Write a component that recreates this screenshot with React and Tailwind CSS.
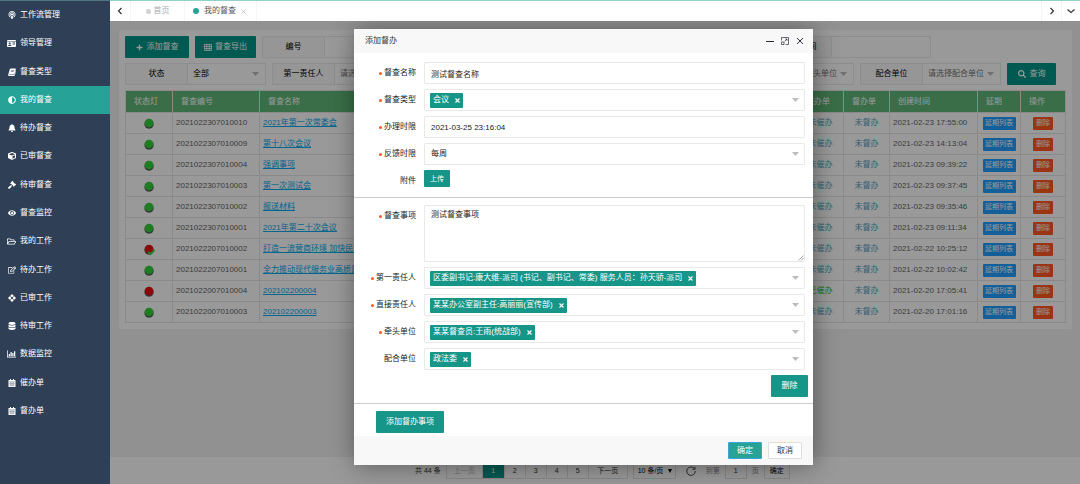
import clsx from 'clsx'
import {
  FaAdjust,
  FaBell,
  FaCube,
  FaDatabase,
  FaEye,
  FaGavel,
  FaIdCard,
  FaPlus,
  FaPodcast,
  FaRegEdit,
  FaRegFolderOpen,
  FaSearch,
} from 'react-icons/fa'

function BookIcon() {
  return (
    <svg viewBox="0 0 16 16" width="1em" height="1em" fill="currentColor">
      <path d="M5.500 1h8.800c1 0 1.600.8 1.300 1.800l-2.600 9c-.2.7-.8 1.200-1.600 1.200H3c-.7 0-.9.9-.1 1h9.300c.5 0 .9-.3 1.100-.8l2.500-8c.6.5.3 1.300.2 1.600l-2.300 7.500c-.3 1-1.100 1.700-2 1.700H2.500C.8 16 0 14.300.5 12.900L3.600 2.500C3.900 1.600 4.600 1 5.500 1zm.9 3-.3 1h6l.3-1zm-.8 2.600-.3 1h6l.3-1z" />
    </svg>
  )
}

function DiamondIcon() {
  return (
    <svg viewBox="0 0 16 16" width="1em" height="1em" fill="currentColor">
      <path
        fillRule="evenodd"
        d="M8 0l3.500 3.500-1 1.300 1 1 1.200-1.200L16 8l-3.300 3.400-1.200-1.200-1 1 1 1.300L8 16l-3.500-3.500 1-1.300-1-1-1.200 1.200L0 8l3.300-3.400 1.200 1.200 1-1-1-1.300zM8 5L5 8l3 3 3-3z"
      />
    </svg>
  )
}

function ChartIcon() {
  return (
    <svg viewBox="0 0 18 16" width="9" height="8" fill="currentColor">
      <path d="M0 1h1.500v12.500H18V15H0zM3.500 8H6v4.500H3.500zM7 4h2.500v8.500H7zM10.500 6H13v6.500h-2.500zM14 2.500h2.500v10H14z" />
    </svg>
  )
}

function CalendarIcon() {
  return (
    <svg viewBox="0 0 16 16" width="1em" height="1em" fill="currentColor">
      <path
        fillRule="evenodd"
        d="M4 0h2v2h4V0h2v2h2.500c.3 0 .5.2.5.5v13c0 .3-.2.500-.5.500h-13a.5.5 0 0 1-.5-.5v-13c0-.3.2-.5.5-.5H4z"
      />
      <path
        d="M2 5.500h12M2 8.800h12M2 12h12M5.300 5.500V15M8 5.500V15M10.700 5.500V15"
        fill="none"
        stroke="#2f4056"
        strokeWidth=".6"
      />
    </svg>
  )
}

function TableIcon() {
  return (
    <svg viewBox="0 0 16 14" width="8" height="7" fill="none" stroke="currentColor" strokeWidth="1.6">
      <path d="M1 1h14v12H1zM1 5h14M1 9h14M5.500 1v12M10.500 1v12" />
    </svg>
  )
}

function Caret() {
  return (
    <svg viewBox="0 0 7 4" width="7" height="4" className="shrink-0" fill="#bbb">
      <path d="M0 0h7L3.500 4z" />
    </svg>
  )
}

function Chevron({ d }) {
  return (
    <svg viewBox="0 0 8 8" width="8" height="8" fill="none" stroke="#333" strokeWidth="1.2">
      <path d={d} />
    </svg>
  )
}

const menus = [
  { name: '工作流管理', icon: <FaPodcast /> },
  { name: '领导管理', icon: <FaIdCard className="text-[9px]" /> },
  { name: '督查类型', icon: <BookIcon /> },
  { name: '我的督查', icon: <FaAdjust />, active: true },
  { name: '待办督查', icon: <FaBell /> },
  { name: '已审督查', icon: <FaCube /> },
  { name: '待审督查', icon: <FaGavel /> },
  { name: '督查监控', icon: <FaEye /> },
  { name: '我的工作', icon: <FaRegFolderOpen className="text-[9px]" /> },
  { name: '待办工作', icon: <FaRegEdit /> },
  { name: '已审工作', icon: <DiamondIcon /> },
  { name: '待审工作', icon: <FaDatabase /> },
  { name: '数据监控', icon: <ChartIcon /> },
  { name: '催办单', icon: <CalendarIcon /> },
  { name: '督办单', icon: <CalendarIcon /> },
]

const rows = [
  { id: '2021022307010010', name: '2021年第一次常委会', time: '2021-02-23 17:55:00' },
  { id: '2021022307010009', name: '第十八次会议', time: '2021-02-23 14:13:04' },
  { id: '2021022307010004', name: '强调事项', time: '2021-02-23 09:39:22' },
  { id: '2021022307010003', name: '第一次测试会', time: '2021-02-23 09:37:45' },
  { id: '2021022307010002', name: '报送材料', time: '2021-02-23 09:35:46' },
  { id: '2021022307010001', name: '2021年第二十次会议', time: '2021-02-23 09:11:34' },
  {
    id: '2021022207010002',
    name: '打造一流营商环境 加快民营经济发展',
    time: '2021-02-22 10:25:12',
    light: 'done',
  },
  { id: '2021022207010001', name: '全力推动现代服务业高质量发展', time: '2021-02-22 10:02:42' },
  { id: '2021022007010004', name: '202102200004', time: '2021-02-20 17:05:41', light: 'red', urged: true },
  { id: '2021022007010003', name: '202102200003', time: '2021-02-20 17:01:16' },
]

const inputFilters = ['编号', '名称', '类型', '创建时间']

const selectFilters = [
  { label: '状态', value: '全部' },
  { label: '第一责任人', value: '请选择第一责任人', empty: true },
  { label: '直接责任人', value: '请选择直接责任人', empty: true },
  { label: '督查类型', value: '请选择督查类型', empty: true },
  { label: '牵头单位', value: '请选择牵头单位', empty: true },
  { label: '配合单位', value: '请选择配合单位', empty: true },
]

function Sidebar() {
  return (
    <nav className="w-[110px] shrink-0 border-t border-[#4f7580] bg-[#2f4056] text-white">
      <ul className="flex min-h-[424px] flex-col">
        {menus.map(({ name, icon, active }) => (
          <li key={name} className="flex flex-1">
            <a
              href="#"
              className={clsx('flex flex-1 items-center gap-1 pl-[7px]', active && 'bg-[#26a296]')}
            >
              <span className="flex w-[9px] justify-center text-[8px]">{icon}</span>
              {name}
            </a>
          </li>
        ))}
      </ul>
    </nav>
  )
}

function TabBar() {
  return (
    <header className="flex h-[21px] shrink-0 border-t border-[#93d0ca] bg-white">
      <button aria-label="向左" className="flex w-[21px] items-center justify-center border-r border-[#f6f6f6]">
        <Chevron d="M5.500 1L2.500 4l3 3" />
      </button>
      <a href="#" className="flex w-[54px] items-center justify-center gap-[3px] border-r border-[#f6f6f6] text-[#aaa]">
        <i className="size-[5px] rounded-full bg-[#d2d2d2]" />
        首页
      </a>
      <a href="#" className="flex w-[72px] items-center gap-[5px] border-r border-[#f6f6f6] pl-2 text-[#555]">
        <i className="size-[6px] rounded-full bg-[#26a296]" />
        我的督查
        <svg viewBox="0 0 5 5" width="5" height="5" stroke="#bbb" strokeWidth=".8">
          <path d="M.5.5l4 4M4.500.5l-4 4" />
        </svg>
      </a>
      <button
        aria-label="向右"
        className="ml-auto flex w-5 items-center justify-center border-l border-[#f6f6f6]"
      >
        <Chevron d="M2.500 1l3 3-3 3" />
      </button>
      <button aria-label="更多" className="flex w-[19px] items-center justify-center border-l border-[#f6f6f6]">
        <Chevron d="M.5 2.500L4 5.500l3.500-3" />
      </button>
    </header>
  )
}

function Filters() {
  return (
    <>
      <div className="flex gap-[6px]">
        <button className="flex h-[22px] w-16 items-center justify-center gap-1 rounded-[1px] bg-[#009688] text-white">
          <FaPlus className="text-[7px]" />
          添加督查
        </button>
        <button className="flex h-[22px] w-[61px] items-center justify-center gap-[3px] rounded-[1px] bg-[#009688] text-white">
          <TableIcon />
          督查导出
        </button>
        <div className="flex gap-[7px]">
          {inputFilters.map(label => (
            <div key={label} className="flex h-[22px] w-[162px] border border-[#ececec]">
              <label
                htmlFor={`filter-${label}`}
                className="flex w-[62px] items-center justify-center border-r border-[#ececec] bg-[#fbfbfb] text-black"
              >
                {label}
              </label>
              <input id={`filter-${label}`} className="min-w-0 flex-1 bg-white px-[6px]" />
            </div>
          ))}
        </div>
      </div>
      <div className="mt-[5px] flex gap-[6px]">
        {selectFilters.map(({ label, value, empty }) => (
          <div key={label} className="flex h-[22px] w-[141px] border border-[#ececec]">
            <label
              htmlFor={`filter-${label}`}
              className="flex w-[62px] items-center justify-center border-r border-[#ececec] bg-[#fbfbfb] text-black"
            >
              {label}
            </label>
            <div className="flex min-w-0 flex-1 items-center pr-[6px]">
              <select
                id={`filter-${label}`}
                className={clsx(
                  'h-full min-w-0 flex-1 appearance-none pl-[5px]',
                  empty ? 'text-[#757575]' : 'text-black',
                )}
              >
                <option>{value}</option>
              </select>
              <Caret />
            </div>
          </div>
        ))}
        <button className="flex h-[22px] w-[49px] items-center justify-center gap-1 rounded-[1px] bg-[#009688] text-white">
          <FaSearch />
          查询
        </button>
      </div>
    </>
  )
}

function Light({ type }) {
  return (
    <svg viewBox="0 0 24 24" width="11" height="11" overflow="visible" className="mx-auto">
      <circle cx="11" cy="13" r="11" fill="#c4c4c4" />
      <circle cx="11" cy="13.500" r="9.500" fill="#555" />
      <circle cx="11" cy="11" r="9.500" fill={type ? '#e81010' : '#2fd038'} />
      {type === 'done' && <path d="M9 17l5 5 9-9" fill="none" stroke="#3bdc3b" strokeWidth="4" />}
    </svg>
  )
}

function SuperviseTable() {
  return (
    <table className="mt-[5px] w-full table-fixed border-collapse text-left text-[#666] [&_td]:border [&_td]:border-[#e6e6e6] [&_td]:px-[3px] [&_th]:border [&_th]:border-[#e6e6e6] [&_th]:pl-2 [&_th]:font-normal">
      <thead>
        <tr className="h-[22px] bg-[#5fb878] text-white">
          <th className="w-[47px]">状态灯</th>
          <th className="w-[87px]">督查编号</th>
          <th>督查名称</th>
          <th className="w-[46px]">催办单</th>
          <th className="w-[46px]">督办单</th>
          <th className="w-[88px]">创建时间</th>
          <th className="w-[43px]">延期</th>
          <th className="w-[45px]">操作</th>
        </tr>
      </thead>
      <tbody>
        {rows.map(({ id, name, time, light, urged }) => (
          <tr key={id} className="h-[21px]">
            <td>
              <Light type={light} />
            </td>
            <td>{id}</td>
            <td>
              <a href="#" className="text-[#01aaed] underline">
                {name}
              </a>
            </td>
            <td className="text-center">
              <a href="#" className={urged ? 'text-[#2bc012]' : 'text-[#5b9dbd]'}>
                {urged ? '已催办' : '未催办'}
              </a>
            </td>
            <td className="text-center">
              <a href="#" className="text-[#5b9dbd]">
                未督办
              </a>
            </td>
            <td>{time}</td>
            <td className="text-center">
              <button className="h-[13px] w-[33px] rounded-[1px] bg-[#1e9fff] text-[7px] text-white">延期列表</button>
            </td>
            <td className="text-center">
              <button className="h-[13px] w-5 rounded-[1px] bg-[#ff5722] text-[7px] text-white">删除</button>
            </td>
          </tr>
        ))}
      </tbody>
    </table>
  )
}

function Pagination() {
  return (
    <footer className="mt-auto flex h-[27px] items-center gap-[5px] bg-white pl-[305px] text-[7px] text-[#333]">
      <span>共 44 条</span>
      <div className="flex h-4 border border-[#e2e2e2] [&>button]:border-r [&>button]:border-[#e2e2e2] [&>button:last-child]:border-r-0">
        <button disabled className="w-[36px] text-[#bbb]">
          上一页
        </button>
        <button className="w-[22px] bg-[#009688] text-white">1</button>
        {[2, 3, 4, 5].map(page => (
          <button key={page} className="w-[21px]">
            {page}
          </button>
        ))}
        <button className="w-[38px]">下一页</button>
      </div>
      <div className="flex h-4 w-[43px] items-center border border-[#e2e2e2] pr-[3px]">
        <select aria-label="每页条数" className="h-full min-w-0 flex-1 appearance-none pl-1 text-black">
          <option>10 条/页</option>
        </select>
        <svg viewBox="0 0 4 4" width="4" height="4" fill="#000">
          <path d="M0 0h4L2 4z" />
        </svg>
      </div>
      <button aria-label="刷新" className="mx-[5px]">
        <svg viewBox="0 0 20 20" width="10" height="10" fill="none" stroke="#333" strokeWidth="1.8">
          <path d="M17 5.500A8.500 8.500 0 1 0 18.500 10M18 1.500v5h-5" />
        </svg>
      </button>
      <label htmlFor="page" className="text-[#888]">
        到第
      </label>
      <input id="page" defaultValue="1" className="h-4 w-[22px] border border-[#e2e2e2] text-center" />
      <span className="text-[#888]">页</span>
      <button className="h-4 w-[26px] border border-[#e2e2e2] text-black">确定</button>
    </footer>
  )
}

function FormRow({ label, id, required, children }) {
  return (
    <div className="flex gap-2 pr-2">
      <label
        htmlFor={id}
        className="flex h-[22px] w-[62px] shrink-0 items-center justify-end gap-[2px] text-[#222]"
      >
        {required && <i className="size-[3px] rounded-full bg-[#ff5722]" />}
        {label}
      </label>
      {children}
    </div>
  )
}

function TagSelect({ id, tag }) {
  return (
    <div className="flex h-[22px] flex-1 items-center justify-between rounded-[1px] border border-[#e9e9e9] px-[5px]">
      <span className="flex h-[15px] items-center gap-[6px] rounded-[1px] bg-[#169688] px-[3px] whitespace-nowrap text-white">
        {tag}
        <button type="button" aria-label={`移除${tag}`}>
          <svg viewBox="0 0 5 5" width="5" height="5" stroke="currentColor" strokeWidth="1.1">
            <path d="M.5.5l4 4M4.500.5l-4 4" />
          </svg>
        </button>
      </span>
      <button id={id} type="button" aria-label="展开" className="flex h-full items-center">
        <Caret />
      </button>
    </div>
  )
}

function SuperviseDialog() {
  return (
    <section
      role="dialog"
      aria-label="添加督办"
      className="absolute top-2 left-[244px] w-[459px] rounded-[1px] bg-white shadow-[1px_1px_25px_rgba(0,0,0,0.4)]"
    >
      <header className="flex h-6 items-center bg-[#f8f8f8] pr-[9px] pl-[11px] text-[#333]">
        <h2 className="flex-1">添加督办</h2>
        <div className="flex items-center gap-[7px]">
          <button aria-label="最小化">
            <svg viewBox="0 0 8 8" width="8" height="8" stroke="#2e2d3c" strokeWidth="1">
              <path d="M0 4.500h8" />
            </svg>
          </button>
          <button aria-label="最大化">
            <svg viewBox="0 0 16 16" width="8" height="8" fill="none" stroke="#2e2d3c" strokeWidth="1.4">
              <path d="M1 7V1h14v14H9M1 10h5v5H1zM7 9l5-5M8.500 4H12v3.500" />
            </svg>
          </button>
          <button aria-label="关闭">
            <svg viewBox="0 0 8 8" width="8" height="8" stroke="#2e2d3c" strokeWidth="1">
              <path d="M1 1l6 6M7 1L1 7" />
            </svg>
          </button>
        </div>
      </header>
      <form onSubmit={event => event.preventDefault()}>
        <div className="flex flex-col gap-[5px] border-b border-[#ccc] pt-[9px] pb-[5px]">
          <FormRow label="督查名称" id="name" required>
            <input
              id="name"
              defaultValue="测试督查名称"
              className="h-[22px] min-w-0 flex-1 rounded-[1px] border border-[#e9e9e9] px-[6px]"
            />
          </FormRow>
          <FormRow label="督查类型" id="type" required>
            <TagSelect id="type" tag="会议" />
          </FormRow>
          <FormRow label="办理时限" id="deadline" required>
            <input
              id="deadline"
              defaultValue="2021-03-25 23:16:04"
              className="h-[22px] min-w-0 flex-1 rounded-[1px] border border-[#e9e9e9] px-[6px]"
            />
          </FormRow>
          <FormRow label="反馈时限" id="feedback" required>
            <div className="flex h-[22px] flex-1 items-center rounded-[1px] border border-[#e9e9e9] pr-[5px]">
              <select id="feedback" className="h-full flex-1 appearance-none pl-[6px]">
                <option>每周</option>
              </select>
              <Caret />
            </div>
          </FormRow>
          <FormRow label="附件" id="upload">
            <button id="upload" type="button" className="h-[17px] w-[26px] rounded-[1px] bg-[#169688] text-[7px] text-white">
              上传
            </button>
          </FormRow>
        </div>
        <div className="flex flex-col gap-[5px] border-b border-[#ccc] pt-[7px] pb-[6px]">
          <FormRow label="督查事项" id="matter" required>
            <div className="relative flex flex-1">
              <textarea
                id="matter"
                defaultValue="测试督查事项"
                className="h-[57px] flex-1 resize-none rounded-[1px] border border-[#e9e9e9] px-[6px] py-[3px]"
              />
              <svg
                viewBox="0 0 6 6"
                width="6"
                height="6"
                className="absolute right-[1px] bottom-[1px]"
                stroke="#888"
                strokeWidth=".7"
              >
                <path d="M.5 5.500l5-5M3 5.500L5.500 3" />
              </svg>
            </div>
          </FormRow>
          <FormRow label="第一责任人" id="first" required>
            <TagSelect id="first" tag="区委副书记:康大维-派司 (书记、副书记、常委) 服务人员：孙天骄-派司" />
          </FormRow>
          <FormRow label="直接责任人" id="direct" required>
            <TagSelect id="direct" tag="某某办公室副主任:高丽丽(宣传部)" />
          </FormRow>
          <FormRow label="牵头单位" id="lead" required>
            <TagSelect id="lead" tag="某某督查员:王雨(统战部)" />
          </FormRow>
          <FormRow label="配合单位" id="assist">
            <TagSelect id="assist" tag="政法委" />
          </FormRow>
          <div className="flex justify-end pr-[5px]">
            <button type="button" className="h-[22px] w-[37px] rounded-[1px] bg-[#169688] text-white">
              删除
            </button>
          </div>
        </div>
        <div className="px-[22px] pt-[7px] pb-[3px]">
          <button type="button" className="h-[22px] w-[68px] rounded-[1px] bg-[#169688] text-white">
            添加督办事项
          </button>
        </div>
        <div className="flex justify-end gap-[6px] bg-[#f8f8f8] px-[11px] py-[6px]">
          <button className="h-[17px] w-[34px] rounded-[1px] border border-[#3fa3d8] bg-[#26a296] text-white">
            确定
          </button>
          <button type="button" className="h-[17px] w-[34px] rounded-[1px] border border-[#dedede] bg-white text-[#333]">
            取消
          </button>
        </div>
      </form>
    </section>
  )
}

export default function App() {
  return (
    <div className="flex min-h-screen font-['Liberation_Sans','Noto_Sans_CJK_SC',sans-serif] text-[8px] leading-[12px] text-[#222]">
      <Sidebar />
      <div className="flex min-w-0 flex-1 flex-col">
        <TabBar />
        <div className="relative flex flex-1 flex-col overflow-hidden bg-[#f2f2f2]">
          <main className="mt-[9px] mr-2 ml-[9px] rounded-[2px] bg-white p-[6px]">
            <Filters />
            <SuperviseTable />
          </main>
          <Pagination />
          <div className="absolute inset-0 bg-black/40" />
          <SuperviseDialog />
        </div>
      </div>
    </div>
  )
}
